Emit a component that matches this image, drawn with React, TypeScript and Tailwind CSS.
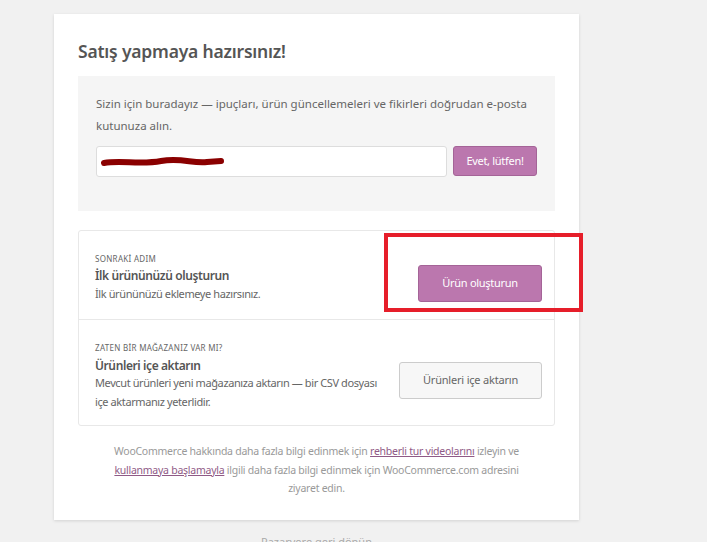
export default function App() {
  return (
    <div className="min-h-[542px] bg-[#f1f1f1] pt-[14px] font-['Noto_Sans',sans-serif] text-[#555]">
      <div className="relative ml-[54px] w-[525px] bg-white px-6 pb-[22px] pt-[24px] shadow-[0_1px_3px_rgba(0,0,0,0.13)]">
        <h1 className="mb-3 text-[17.5px] font-semibold leading-[26px] tracking-[-0.2px] text-[#555]">Satış yapmaya hazırsınız!</h1>

        {/* newsletter */}
        <div className="bg-[#f5f5f5] px-[18px] pb-[34px] pt-[17px]">
          <p className="text-[11.5px] leading-[22px] text-[#666]">
            Sizin için buradayız — ipuçları, ürün güncellemeleri ve fikirleri doğrudan e-posta kutunuza alın.
          </p>
          <div className="mt-[9px] flex items-start gap-[6px]">
            <div className="relative h-[31px] w-[351px] rounded-[3px] border border-[#ddd] bg-white">
              <svg className="absolute left-[4px] top-[8px]" width="126" height="14" viewBox="0 0 126 14">
                <path d="M3 8 C 20 5, 40 10, 60 6 S 92 9, 106 7 L 120 6" stroke="#8a0000" strokeWidth="6" fill="none" strokeLinecap="round" />
              </svg>
            </div>
            <button className="h-[30px] w-[84px] rounded-[3px] border border-[#a46497] bg-[#bb77ae] text-[11px] tracking-[-0.3px] text-white">
              Evet, lütfen!
            </button>
          </div>
        </div>

        {/* next steps */}
        <div className="mt-[19px] rounded-[3px] border border-[#e8e8e8]">
          <div className="flex h-[89px] items-center justify-between border-b border-[#e8e8e8] pl-4 pr-[12px]">
            <div className="pt-[5px]">
              <div className="text-[8px] uppercase leading-[12px] tracking-[0.3px] text-[#666]">SONRAKİ ADIM</div>
              <div className="mt-[2px] text-[12px] font-semibold leading-[18px] tracking-[-0.4px] text-[#555]">İlk ürününüzü oluşturun</div>
              <div className="text-[11px] leading-[18px] tracking-[-0.4px] text-[#666]">İlk ürününüzü eklemeye hazırsınız.</div>
            </div>
            <button className="mt-[16px] h-[37px] w-[124px] rounded-[3px] border border-[#a46497] bg-[#bb77ae] text-[11px] tracking-[-0.3px] text-white">
              Ürün oluşturun
            </button>
          </div>
          <div className="flex h-[105px] items-center justify-between pl-4 pr-[12px]">
            <div className="pt-[7px]">
              <div className="text-[8px] uppercase leading-[12px] tracking-[0.3px] text-[#666]">ZATEN BİR MAĞAZANIZ VAR MI?</div>
              <div className="mt-[3px] text-[12px] font-semibold leading-[18px] tracking-[-0.4px] text-[#555]">Ürünleri içe aktarın</div>
              <div className="-mt-[2px] whitespace-nowrap text-[11px] leading-[19px] tracking-[-0.4px] text-[#666]">
                Mevcut ürünleri yeni mağazanıza aktarın — bir CSV dosyası
                <br />
                içe aktarmanız yeterlidir.
              </div>
            </div>
            <button className="mt-[16px] h-[37px] w-[143px] rounded-[3px] border border-[#ccc] bg-[#f7f7f7] text-[11px] tracking-[-0.2px] text-[#666]">
              Ürünleri içe aktarın
            </button>
          </div>
        </div>

        {/* footer text */}
        <p className="mt-[16px] text-center text-[10.5px] leading-[18.5px] tracking-[-0.25px] text-[#999]">
          WooCommerce hakkında daha fazla bilgi edinmek için{' '}
          <a className="text-[#8f5a86] underline">rehberli tur videolarını</a> izleyin ve
          <br />
          <a className="text-[#8f5a86] underline">kullanmaya başlamayla</a> ilgili daha fazla bilgi edinmek için WooCommerce.com adresini
          <br />
          ziyaret edin.
        </p>

        {/* annotation */}
        <div className="absolute left-[330px] top-[219px] h-[79px] w-[199px] border-[4px] border-[#e61e2a]" />
      </div>
      <div className="mt-[14px] w-[579px] pl-[54px] text-center text-[11px] text-[#aaa]">Pazaryere geri dönün</div>
    </div>
  );
}
